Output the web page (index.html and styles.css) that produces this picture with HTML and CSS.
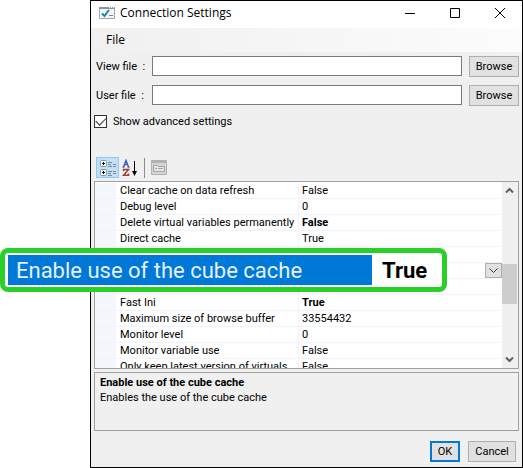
FILE: index.html
```html
<!DOCTYPE html>
<html lang="en">
<head>
<meta charset="utf-8">
<title>Connection Settings</title>
<link rel="stylesheet" href="styles.css">
</head>
<body>
<main class="window">
  <header class="titlebar">
    <svg class="app-icon" width="16" height="12" viewBox="0 0 16 12" aria-hidden="true">
      <path fill="#f4f5f7" stroke="#a3a8b0" d="M.5.5h15v11H.5z"/>
      <path fill="#8d949e" d="M0 0h16v2H0z"/>
      <path fill="#fff" d="M10 0h1v1h-1zM12 0h1v1h-1zM14 0h1v1h-1z"/>
      <path fill="none" stroke="#1683b5" stroke-width="2" d="M3 6.500 5.500 9 10 3"/>
      <path stroke="#808891" d="M10 8.500h4"/>
    </svg>
    <h1 class="title">Connection Settings</h1>
    <div class="window-controls">
      <button type="button" aria-label="Minimize"><svg width="10" height="10" viewBox="0 0 10 10"><path d="M0 5.500h10"/></svg></button>
      <button type="button" aria-label="Maximize"><svg width="10" height="10" viewBox="0 0 10 10"><path d="M.5.5h9v9h-9z"/></svg></button>
      <button type="button" aria-label="Close"><svg width="10" height="10" viewBox="0 0 10 10"><path d="M0 0l10 10M10 0 0 10"/></svg></button>
    </div>
  </header>
  <nav class="menubar"><button type="button">File</button></nav>

  <form class="content">
    <div class="file-row">
      <label for="view-file">View file&nbsp; :</label>
      <input id="view-file" type="text">
      <button class="button" type="button">Browse</button>
    </div>
    <div class="file-row">
      <label for="user-file">User file&nbsp; :</label>
      <input id="user-file" type="text">
      <button class="button" type="button">Browse</button>
    </div>
    <label class="advanced"><input type="checkbox" checked><span>Show advanced settings</span></label>

    <div class="toolbar">
      <button class="tool active" type="button" aria-label="Categorized">
        <svg width="18" height="18" viewBox="0 0 18 18">
          <g fill="#fff" stroke="#7c97b5"><rect x="1.500" y="1.500" width="6" height="6" rx="1"/><rect x="1.500" y="10.500" width="6" height="6" rx="1"/></g>
          <path stroke="#111" d="M3 4.500h3M4.500 3v3M3 13.500h3M4.500 12v3"/>
          <path stroke="#7888a0" d="M9 3.500h4M9 5.500h3M9 7.500h4M9 12.500h4M9 14.500h3M9 16.500h4M14 5.500h3M14 7.500h3M14 12.500h3M14 14.500h3"/>
        </svg>
      </button>
      <button class="tool" type="button" aria-label="Alphabetical">
        <svg width="18" height="18" viewBox="0 0 18 18" fill="none">
          <path stroke="#3d62b5" stroke-width="1.500" d="M1.500 8 4 1.500 6.500 8M2 5.500h4M.5 8h2M5.500 8h2"/>
          <path stroke="#a03b3b" stroke-width="1.500" d="M1.500 12v-1.500h5L1.500 16.300h5V14.500"/>
          <path stroke="#000" d="M12.500 2v13"/><path fill="#000" d="M10 12h5L12.500 17z"/>
        </svg>
      </button>
      <span class="divider"></span>
      <button class="tool" type="button" aria-label="Property Pages" disabled>
        <svg width="16" height="15" viewBox="0 0 16 15" fill="none">
          <path fill="#d5d5d5" stroke="#b1b1b1" d="M.5.5h15v14H.5z"/><path stroke="#b1b1b1" stroke-width="2" d="M1 2h14"/>
          <path fill="#e6e6e6" stroke="#a5a5a5" d="M2.500 11.500v-6h4l1 1h6v5z"/><path stroke="#a5a5a5" d="M4 8.500h2M7 8.500h5"/>
        </svg>
      </button>
    </div>

    <section class="grid" aria-label="Advanced settings">
      <table class="properties">
        <colgroup><col class="gutter"><col class="name"><col></colgroup>
        <tbody>
          <tr><td></td><th scope="row">Clear cache on data refresh</th><td>False</td></tr>
          <tr><td></td><th scope="row">Debug level</th><td>0</td></tr>
          <tr><td></td><th scope="row">Delete virtual variables permanently</th><td><b>False</b></td></tr>
          <tr><td></td><th scope="row">Direct cache</th><td>True</td></tr>
          <tr><td></td><th scope="row"></th><td></td></tr>
          <tr class="selected"><td></td><th scope="row"></th><td><div class="choice"><button type="button" aria-label="Show values"><svg width="9" height="6" viewBox="0 0 9 6"><path d="m.5.5 4 4 4-4"/></svg></button></div></td></tr>
          <tr><td></td><th scope="row"></th><td></td></tr>
          <tr><td></td><th scope="row">Fast Ini</th><td><b>True</b></td></tr>
          <tr><td></td><th scope="row">Maximum size of browse buffer</th><td>33554432</td></tr>
          <tr><td></td><th scope="row">Monitor level</th><td>0</td></tr>
          <tr><td></td><th scope="row">Monitor variable use</th><td>False</td></tr>
          <tr><td></td><th scope="row">Only keep latest version of virtuals</th><td>False</td></tr>
        </tbody>
      </table>
      <div class="scrollbar">
        <button type="button" aria-label="Scroll up"><svg width="9" height="7" viewBox="0 0 9 7"><path d="m1 5.500 3.500-3.500L8 5.500"/></svg></button>
        <div class="track"><div class="thumb"></div></div>
        <button type="button" aria-label="Scroll down"><svg width="9" height="7" viewBox="0 0 9 7"><path d="M1 1.500 4.500 5 8 1.500"/></svg></button>
      </div>
    </section>

    <section class="description">
      <h2>Enable use of the cube cache</h2>
      <p>Enables the use of the cube cache</p>
    </section>

    <footer class="actions">
      <button class="button primary" type="button">OK</button>
      <button class="button cancel" type="button">Cancel</button>
    </footer>
  </form>
</main>

<aside class="callout">
  <span class="callout-name">Enable use of the cube cache</span>
  <strong class="callout-value">True</strong>
</aside>
</body>
</html>
```

FILE: styles.css
```css
* { box-sizing: border-box; }

body {
  position: relative;
  margin: 0;
  padding-left: 90px;
  background: #fff;
  color: #000;
  font: 11px/16px Roboto, "Liberation Sans", sans-serif;
}

button, input { margin: 0; font: inherit; color: inherit; }
button { padding: 0; border: 0; background: none; }
svg { display: block; }

.window {
  border: 1px solid #000;
  background: #f0f0f0;
}

.titlebar {
  display: flex;
  align-items: center;
  height: 27px;
  padding: 0 0 3px 8px;
  background: #fff;
}
.title {
  flex: 1;
  margin: 0 0 0 5px;
  font: 12px/16px "Open Sans", sans-serif;
}
.window-controls { display: flex; }
.window-controls button {
  display: grid;
  place-items: center;
  width: 45px;
  height: 24px;
}
.window-controls path { fill: none; stroke: #000; }

.menubar {
  height: 24px;
  padding-left: 15px;
  background: linear-gradient(90deg, #f0f0f0, #fcfcfc);
  font: 12px/24px "Open Sans", sans-serif;
}

.content { padding: 4px 3px 5px; }

.file-row {
  display: grid;
  grid-template-columns: 51px 1fr 50px;
  column-gap: 7px;
  height: 21px;
  margin-bottom: 8px;
}
.file-row label { padding-left: 2px; line-height: 22px; white-space: nowrap; }
.file-row input {
  width: 100%;
  height: 20px;
  border: 1px solid #7a7a7a;
  background: #fff;
}

.button {
  height: 21px;
  border: 1px solid #adadad;
  background: #e1e1e1;
}

.advanced {
  display: flex;
  align-items: center;
  gap: 6px;
  height: 15px;
}
.advanced input {
  display: grid;
  place-items: center;
  width: 13px;
  height: 13px;
  appearance: none;
  border: 1px solid #333;
  background: #fff;
}
.advanced input:checked::after {
  content: "";
  width: 9px;
  height: 5px;
  margin-bottom: 3px;
  border: solid #333;
  border-width: 0 0 1px 1px;
  transform: rotate(-45deg);
}

.toolbar {
  display: flex;
  align-items: center;
  height: 21px;
  margin: 28px 0 3px 2px;
}
.tool { display: grid; place-items: center; width: 23px; height: 21px; }
.tool.active { border: 1px solid #90c8f6; background: #c4dff5; }
.divider { width: 1px; height: 20px; margin: 0 2px; background: #8d8d8d; }

.grid {
  display: flex;
  height: 188px;
  overflow: hidden;
  border: 1px solid #a0a0a0;
  background: #fff;
}
.properties {
  flex: 1;
  align-self: flex-start;
  table-layout: fixed;
  width: 0;
  margin-top: 1px;
  border-spacing: 0;
}
.gutter { width: 21px; }
.name { width: 183px; }
.properties td, .properties th {
  height: 16px;
  padding: 1px 3px 0 4px;
  border-bottom: 1px solid #f0f4fa;
  font-weight: 400;
  line-height: 14px;
  text-align: left;
  white-space: nowrap;
}
.properties td { padding-left: 3px; }
.properties b { font-weight: 700; }
.properties th { border-right: 1px solid #f0f4fa; }
.properties td:first-child { background: #f4f7fc; }
.properties .selected th { background: #0078d7; }
.properties .selected td { padding: 0; }
.choice { display: flex; justify-content: flex-end; }
.choice button {
  display: grid;
  place-items: center;
  width: 17px;
  height: 15px;
  border: 1px solid #adadad;
  background: #e1e1e1;
}
.choice path { fill: none; stroke: #333; }

.scrollbar {
  display: flex;
  flex-direction: column;
  width: 16px;
  background: #f0f0f0;
}
.scrollbar button { display: grid; place-items: center; width: 15px; height: 17px; }
.scrollbar path { fill: none; stroke: #606060; stroke-width: 2; }
.track { flex: 1; padding-top: 65px; }
.thumb { width: 15px; height: 40px; background: #cdcdcd; }

.description {
  height: 59px;
  margin-top: 3px;
  padding: 2px 5px;
  border: 1px solid #a0a0a0;
}
.description h2, .description p { margin: 0; font-size: 11px; line-height: 15px; }

.actions {
  display: flex;
  justify-content: flex-end;
  gap: 8px;
  padding: 10px 3px 0 0;
}
.primary { width: 30px; border: 2px solid #0078d7; }
.cancel { width: 48px; }

.callout {
  position: absolute;
  top: 248px;
  left: 0;
  display: flex;
  width: 447px;
  height: 44px;
  padding: 2px 3px;
  border: 5px solid #28d028;
  border-radius: 8px;
  background: #fff;
  font-size: 22px;
  line-height: 32px;
  white-space: nowrap;
}
.callout-name {
  flex: 0 0 364px;
  padding-left: 8px;
  background: #0078d7;
  color: #e4f1fc;
}
.callout-value { padding-left: 10px; }
```
